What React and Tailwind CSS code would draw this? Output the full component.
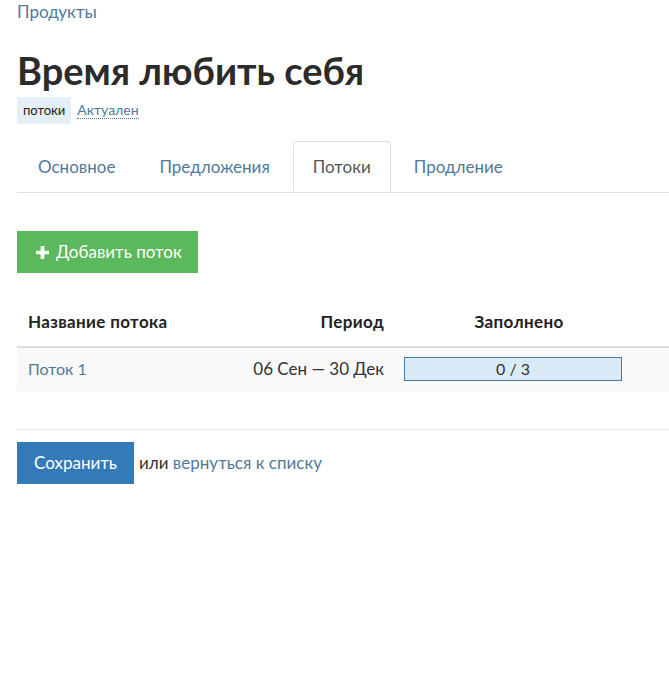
import React from "react";

const tabs = ["Основное", "Предложения", "Потоки", "Продление"];

export default function App() {
  const active = "Потоки";
  return (
    <div className="min-h-screen bg-white pl-[17px] text-[#333] font-['Lato','Open_Sans',sans-serif] overflow-hidden">
      <div>
        <a className="text-[17px] leading-[24px] text-[#52799b]">Продукты</a>
      </div>

      <h1 className="mt-[25px] text-[38px] leading-[42px] font-bold text-[#2b2b2b]">Время любить себя</h1>

      <div className="mt-[6px] flex items-center gap-[6px]">
        <span className="bg-[#e5eff7] px-[6px] h-[27px] flex items-center text-[13px] text-[#222]">потоки</span>
        <a className="text-[14px] text-[#52799b] border-b border-dotted border-[#52799b] leading-[16px]">Актуален</a>
      </div>

      <div className="mt-[17px] flex border-b border-[#ddd]">
        {tabs.map((t) => (
          <div
            key={t}
            className={
              t === active
                ? "mr-[2px] -mb-px px-[19px] h-[51px] flex items-center text-[17px] text-[#555] bg-white border border-[#ddd] border-b-white rounded-t-[4px]"
                : "mr-[2px] px-[21px] h-[51px] flex items-center text-[17px] text-[#52799b]"
            }
          >
            {t}
          </div>
        ))}
      </div>

      <button className="mt-[38px] h-[42px] pl-[19px] pr-[16px] bg-[#5cb85c] text-white text-[17px] flex items-center gap-[7px]">
        <svg width="13" height="13" viewBox="0 0 14 14">
          <path d="M5 0h4v5h5v4H9v5H5V9H0V5h5z" fill="white" />
        </svg>
        Добавить поток
      </button>

      <table className="mt-[25px] w-[652px] table-fixed border-collapse">
        <thead>
          <tr className="border-b-2 border-[#ddd]">
            <th className="w-[213px] text-left px-[11px] py-[11px] text-[17px] tracking-[0.02em] font-bold text-[#222]">Название потока</th>
            <th className="w-[162px] text-right px-[8px] py-[11px] text-[17px] tracking-[0.02em] font-bold text-[#222]">Период</th>
            <th className="w-[238px] text-center pl-[20px] pr-[4px] py-[11px] text-[17px] tracking-[0.02em] font-bold text-[#222]">Заполнено</th>
            <th></th>
          </tr>
        </thead>
        <tbody>
          <tr className="bg-[#f9f9f9]">
            <td className="px-[11px] h-[44px] text-[16px] text-[#52799b]">Поток 1</td>
            <td className="px-[8px] text-right text-[17px] text-[#333] whitespace-nowrap">06 Сен — 30 Дек</td>
            <td className="pl-[12px] pr-[8px]">
              <div className="h-[24px] bg-[#d9ebf7] border border-[#4a7aa3] flex items-center justify-center text-[16px] text-[#333]">
                0 / 3
              </div>
            </td>
            <td></td>
          </tr>
        </tbody>
      </table>

      <div className="mt-[38px] border-t border-[#e5e5e5] pt-[12px] flex items-center gap-[5px]">
        <button className="h-[42px] px-[17px] bg-[#337ab7] text-white text-[17px]">Сохранить</button>
        <span className="text-[17px] text-[#333]">
          или <a className="text-[#52799b]">вернуться к списку</a>
        </span>
      </div>
    </div>
  );
}
